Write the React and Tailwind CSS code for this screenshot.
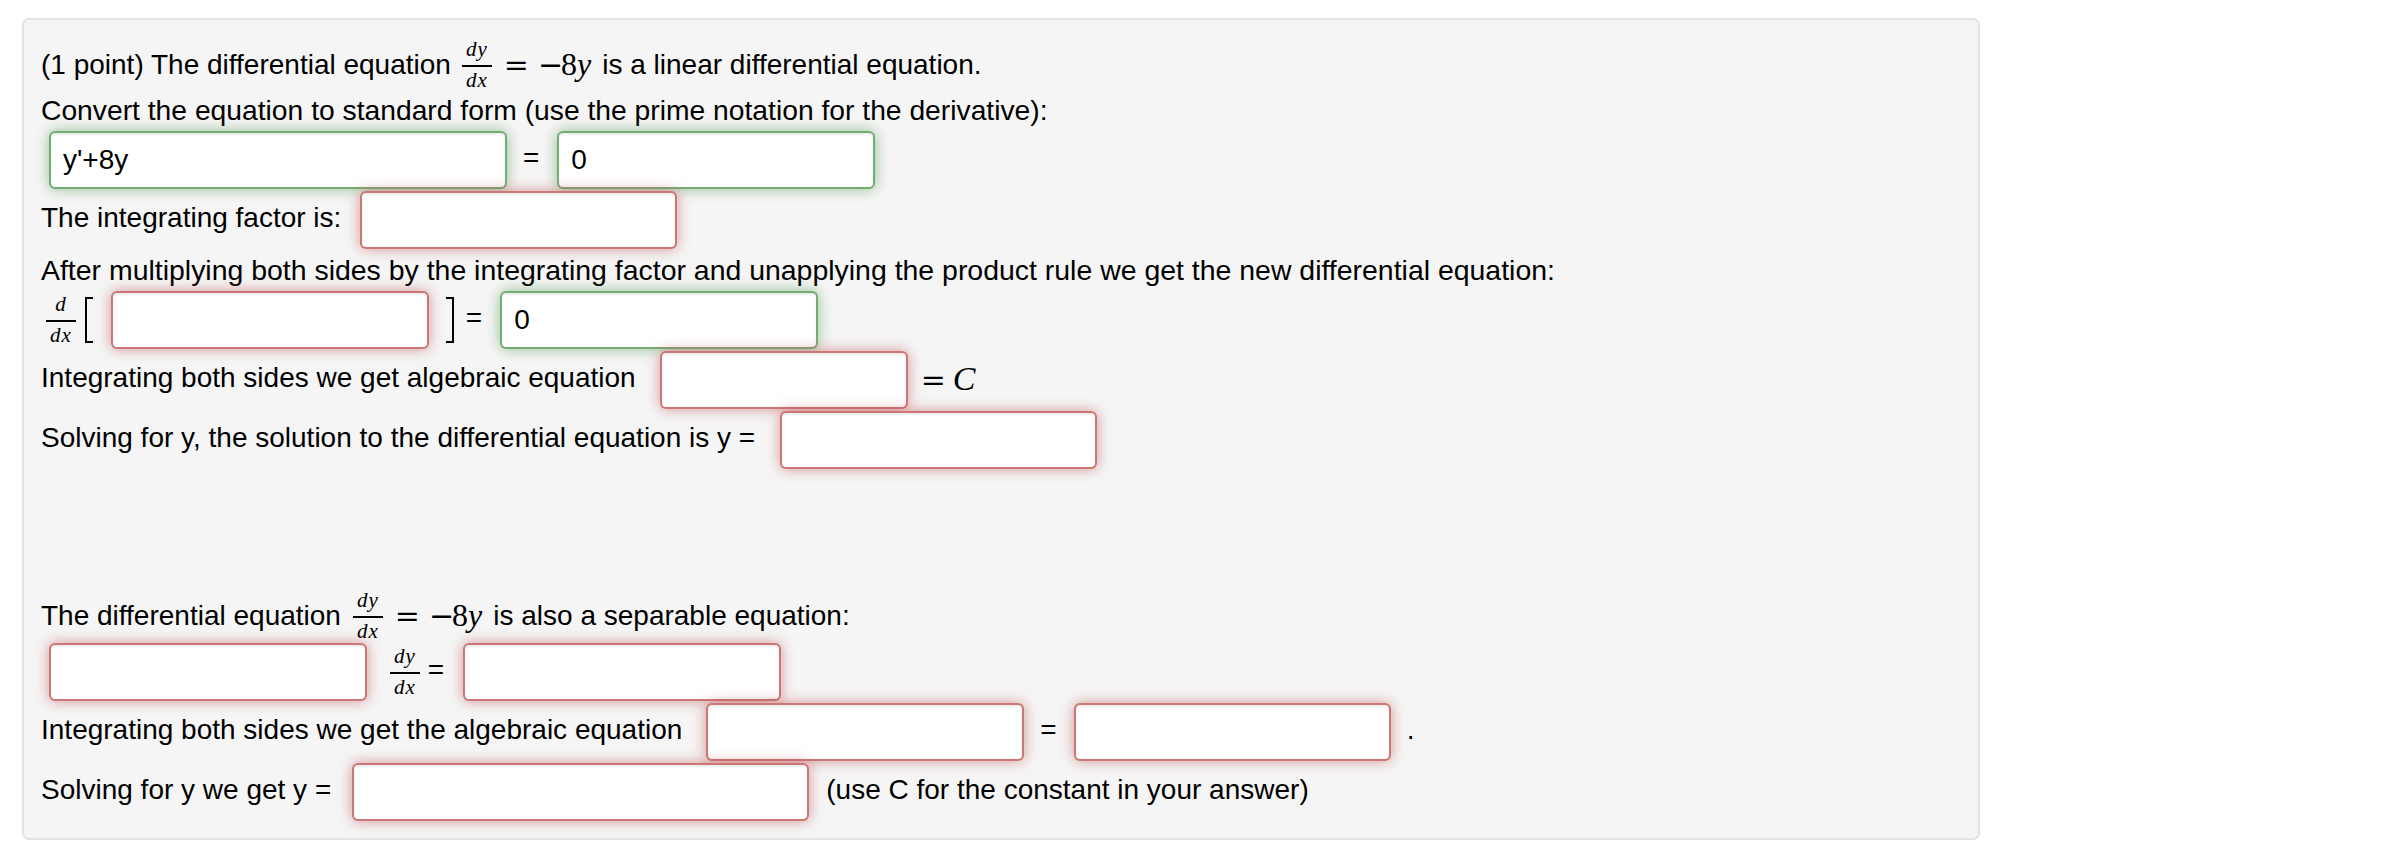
import React from "react";

function Frac({ num, den, className = "" }) {
  return (
    <span
      className={`inline-flex shrink-0 flex-col items-stretch font-['Liberation_Serif',serif] italic text-[21px] leading-[21px] tracking-[1px] text-black ${className}`}
    >
      <span className="block whitespace-nowrap px-[4px] text-center">{num}</span>
      <span className="mb-[3.5px] mt-[4.5px] block h-[2px] bg-black" />
      <span className="block whitespace-nowrap px-[4px] text-center">{den}</span>
    </span>
  );
}

function Op({ children, className = "" }) {
  return (
    <span className={`shrink-0 font-['DejaVu_Serif',serif] text-[30px] leading-[30px] ${className}`}>
      {children}
    </span>
  );
}

function Ans({ w, value = "", ok = false, className = "" }) {
  return (
    <div
      className={`flex h-[58px] shrink-0 items-center rounded-[6px] border-2 bg-white pl-[12px] text-[28px] ${w} ${
        ok
          ? "border-[rgba(81,153,81,0.8)] shadow-[inset_0_2px_2px_rgba(0,0,0,0.075),0_0_14px_rgba(81,153,81,0.6)]"
          : "border-[rgba(191,84,84,0.8)] shadow-[inset_0_2px_2px_rgba(0,0,0,0.075),0_0_14px_rgba(191,84,84,0.6)]"
      } ${className}`}
    >
      {value}
    </div>
  );
}

function T({ children, className = "" }) {
  return <span className={`shrink-0 whitespace-pre pb-[5px] ${className}`}>{children}</span>;
}

export default function App() {
  return (
    <div className="min-h-[848px] bg-white pl-[22px] pt-[18px] font-['Liberation_Sans',Arial,sans-serif] text-[28px] leading-none text-black">
      <div className="w-[1958px] rounded-[7px] border-2 border-[#e3e3e3] bg-[#f5f5f5] pb-[16px] pl-[17px] pt-[19px]">
        {/* Row 1 */}
        <div className="flex h-[52px] items-center">
          <span className="shrink-0 whitespace-pre">(1 point) The differential equation</span>
          <Frac num="dy" den="dx" className="ml-[11px]" />
          <Op className="ml-[12px]">=</Op>
          <Op className="ml-[9px]">−</Op>
          <span className="-ml-[2px] shrink-0 pb-[2px] font-['Liberation_Serif',serif] text-[32px] leading-[32px]">8</span>
          <span className="shrink-0 pb-[2px] font-['Liberation_Serif',serif] text-[32px] italic leading-[32px]">y</span>
          <span className="ml-[11px] shrink-0 whitespace-pre">is a linear differential equation.</span>
        </div>
        {/* Row 2 */}
        <div className="flex h-[39px] items-center">
          <span className="whitespace-pre text-[28.25px]">Convert the equation to standard form (use the prime notation for the derivative):</span>
        </div>
        {/* Row 3 */}
        <div className="flex h-[60px] items-center">
          <Ans w="w-[458px]" value="y'+8y" ok className="ml-[8px]" />
          <T className="ml-[16px]">=</T>
          <Ans w="w-[318px]" value="0" ok className="ml-[18px]" />
        </div>
        {/* Row 4 */}
        <div className="flex h-[60px] items-center">
          <T>The integrating factor is:</T>
          <Ans w="w-[317px]" className="ml-[19px]" />
        </div>
        {/* Row 5 */}
        <div className="flex h-[40px] items-center">
          <span className="whitespace-pre text-[28.45px]">
            After multiplying both sides by the integrating factor and unapplying the product rule we get the new differential equation:
          </span>
        </div>
        {/* Row 6 */}
        <div className="flex h-[60px] items-center">
          <Frac num="d" den="dx" className="ml-[5px]" />
          <span className="ml-[9px] h-[46px] w-[8px] shrink-0 border-y-2 border-l-2 border-black" />
          <Ans w="w-[318px]" className="ml-[18px]" />
          <span className="ml-[17px] h-[46px] w-[8px] shrink-0 border-y-2 border-r-2 border-black" />
          <T className="ml-[12px]">=</T>
          <Ans w="w-[318px]" value="0" ok className="ml-[18px]" />
        </div>
        {/* Row 7 */}
        <div className="flex h-[60px] items-center">
          <T>Integrating both sides we get algebraic equation</T>
          <Ans w="w-[248px]" className="ml-[24px]" />
          <Op className="ml-[13px]">=</Op>
          <span className="ml-[7px] shrink-0 pb-[2px] font-['Liberation_Serif',serif] text-[34px] italic leading-[34px]">C</span>
        </div>
        {/* Row 8 */}
        <div className="flex h-[60px] items-center">
          <T>Solving for y, the solution to the differential equation is y =</T>
          <Ans w="w-[317px]" className="ml-[25px]" />
        </div>

        {/* Row 9 */}
        <div className="mt-[120px] flex h-[52px] items-center">
          <span className="shrink-0 whitespace-pre">The differential equation</span>
          <Frac num="dy" den="dx" className="ml-[12px]" />
          <Op className="ml-[12px]">=</Op>
          <Op className="ml-[9px]">−</Op>
          <span className="-ml-[2px] shrink-0 pb-[2px] font-['Liberation_Serif',serif] text-[32px] leading-[32px]">8</span>
          <span className="shrink-0 pb-[2px] font-['Liberation_Serif',serif] text-[32px] italic leading-[32px]">y</span>
          <span className="ml-[11px] shrink-0 whitespace-pre">is also a separable equation:</span>
        </div>
        {/* Row 10 */}
        <div className="flex h-[60px] items-center">
          <Ans w="w-[318px]" className="ml-[8px]" />
          <Frac num="dy" den="dx" className="ml-[23px]" />
          <T className="ml-[8px]">=</T>
          <Ans w="w-[318px]" className="ml-[19px]" />
        </div>
        {/* Row 11 */}
        <div className="flex h-[60px] items-center">
          <T>Integrating both sides we get the algebraic equation</T>
          <Ans w="w-[318px]" className="ml-[24px]" />
          <T className="ml-[16px]">=</T>
          <Ans w="w-[317px]" className="ml-[17px]" />
          <T className="ml-[16px]">.</T>
        </div>
        {/* Row 12 */}
        <div className="flex h-[60px] items-center">
          <T>Solving for y we get y =</T>
          <Ans w="w-[457px]" className="ml-[21px]" />
          <T className="ml-[17px]">(use C for the constant in your answer)</T>
        </div>
      </div>
    </div>
  );
}
